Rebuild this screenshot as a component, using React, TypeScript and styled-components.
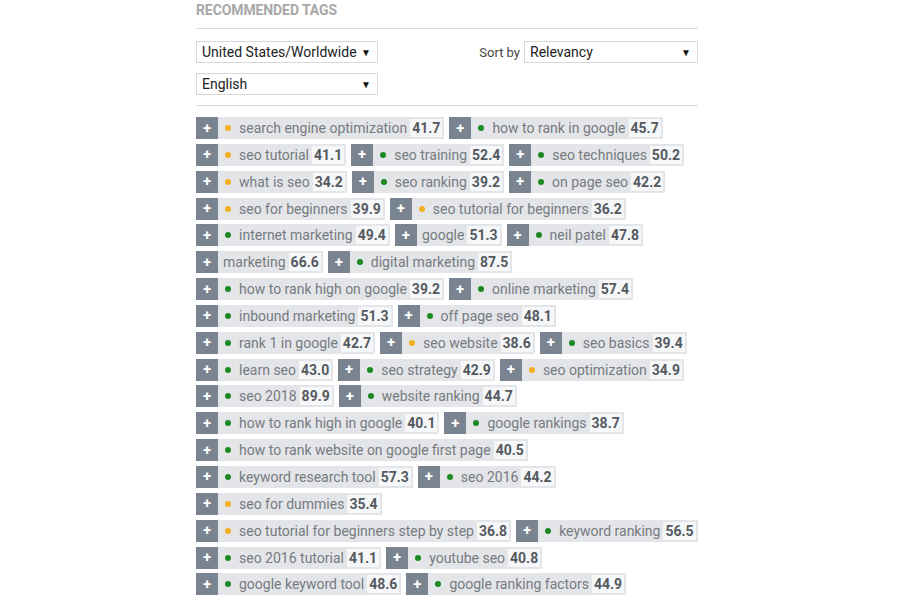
import React from "react";
import styled, { createGlobalStyle } from "styled-components";

const GlobalStyle = createGlobalStyle`
  html, body {
    margin: 0;
    padding: 0;
    background: #ffffff;
  }
  body {
    font-family: Roboto, "Liberation Sans", Arial, sans-serif;
  }
`;

type Dot = "o" | "g" | null;
type Tag = [Dot, string, string];

const rows: Tag[][] = [
  [["o", "search engine optimization", "41.7"], ["g", "how to rank in google", "45.7"]],
  [["o", "seo tutorial", "41.1"], ["g", "seo training", "52.4"], ["g", "seo techniques", "50.2"]],
  [["o", "what is seo", "34.2"], ["g", "seo ranking", "39.2"], ["g", "on page seo", "42.2"]],
  [["o", "seo for beginners", "39.9"], ["o", "seo tutorial for beginners", "36.2"]],
  [["g", "internet marketing", "49.4"], [null, "google", "51.3"], ["g", "neil patel", "47.8"]],
  [[null, "marketing", "66.6"], ["g", "digital marketing", "87.5"]],
  [["g", "how to rank high on google", "39.2"], ["g", "online marketing", "57.4"]],
  [["g", "inbound marketing", "51.3"], ["g", "off page seo", "48.1"]],
  [["g", "rank 1 in google", "42.7"], ["o", "seo website", "38.6"], ["g", "seo basics", "39.4"]],
  [["g", "learn seo", "43.0"], ["g", "seo strategy", "42.9"], ["o", "seo optimization", "34.9"]],
  [["g", "seo 2018", "89.9"], ["g", "website ranking", "44.7"]],
  [["g", "how to rank high in google", "40.1"], ["g", "google rankings", "38.7"]],
  [["g", "how to rank website on google first page", "40.5"]],
  [["g", "keyword research tool", "57.3"], ["g", "seo 2016", "44.2"]],
  [["o", "seo for dummies", "35.4"]],
  [["o", "seo tutorial for beginners step by step", "36.8"], ["g", "keyword ranking", "56.5"]],
  [["g", "seo 2016 tutorial", "41.1"], ["g", "youtube seo", "40.8"]],
  [["g", "google keyword tool", "48.6"], ["g", "google ranking factors", "44.9"]],
  [["g", "how to rank on google first page", "41.2"]],
];

const Page = styled.div`
  margin-left: 196px;
  width: 502px;
`;

const Title = styled.h2`
  margin: 0;
  font-size: 14px;
  line-height: 20px;
  font-weight: 700;
  color: #a8a8a8;
  letter-spacing: -0.1px;
`;

const Divider = styled.hr<{ $top: number }>`
  margin: ${(p) => p.$top}px 0 0 0;
  border: 0;
  border-top: 1px solid #dcdcdc;
  height: 0;
`;

const Filters = styled.div`
  margin-top: 12px;
  display: grid;
  grid-template-columns: 182px 1fr;
  row-gap: 10px;
`;

const SortGroup = styled.div`
  display: flex;
  align-items: center;
  justify-content: flex-end;
  gap: 4px;
`;

const SortLabel = styled.span`
  font-size: 13px;
  color: #444;
  white-space: nowrap;
`;

const Select = styled.div<{ $w: number }>`
  box-sizing: border-box;
  width: ${(p) => p.$w}px;
  height: 22px;
  border: 1px solid #d9d9d9;
  background: #fff;
  display: flex;
  align-items: center;
  justify-content: space-between;
  padding: 0 6px 0 5px;
  font-size: 14px;
  color: #222;
  white-space: nowrap;
`;

const Arrow = styled.span`
  font-size: 10px;
  color: #111;
`;

const TagList = styled.div`
  margin-top: 11px;
  display: flex;
  flex-direction: column;
  gap: 4.85px;
`;

const TagRow = styled.div`
  display: flex;
  gap: 5px;
`;

const TagBox = styled.div`
  display: flex;
  flex-shrink: 0;
  height: 22px;
  background: #e3e5e8;
  white-space: nowrap;
`;

const Plus = styled.span`
  width: 22px;
  background: #7a8490;
  color: #fff;
  font-size: 15px;
  font-weight: 700;
  display: flex;
  align-items: center;
  justify-content: center;
  line-height: 1;
`;

const Body = styled.div`
  display: flex;
  align-items: center;
  padding: 0 2px 0 5px;
  font-size: 14px;
  color: #777b80;
`;

const Bullet = styled.span<{ $c: "o" | "g" }>`
  width: 6px;
  height: 6px;
  border-radius: 50%;
  margin: 0 8px 0 2px;
  background: ${(p) => (p.$c === "o" ? "#f2b01e" : "#1b8a22")};
`;

const Score = styled.span`
  margin-left: 3px;
  padding: 0 2px;
  height: 18px;
  line-height: 18px;
  background: #f6f7f8;
  color: #555a60;
  font-weight: 700;
`;

const TagItem = ({ dot, label, score }: { dot: Dot; label: string; score: string }) => (
  <TagBox>
    <Plus>+</Plus>
    <Body>
      {dot && <Bullet $c={dot} />}
      <span>{label}</span>
      <Score>{score}</Score>
    </Body>
  </TagBox>
);

export default function App() {
  return (
    <>
      <GlobalStyle />
      <Page>
        <Title>RECOMMENDED TAGS</Title>
        <Divider $top={8} />
        <Filters>
          <Select $w={182}>
            <span>United States/Worldwide</span>
            <Arrow>▼</Arrow>
          </Select>
          <SortGroup>
            <SortLabel>Sort by</SortLabel>
            <Select $w={174}>
              <span>Relevancy</span>
              <Arrow>▼</Arrow>
            </Select>
          </SortGroup>
          <Select $w={182}>
            <span>English</span>
            <Arrow>▼</Arrow>
          </Select>
        </Filters>
        <Divider $top={10} />
        <TagList>
          {rows.map((row, i) => (
            <TagRow key={i}>
              {row.map(([dot, label, score]) => (
                <TagItem key={label} dot={dot} label={label} score={score} />
              ))}
            </TagRow>
          ))}
        </TagList>
      </Page>
    </>
  );
}
